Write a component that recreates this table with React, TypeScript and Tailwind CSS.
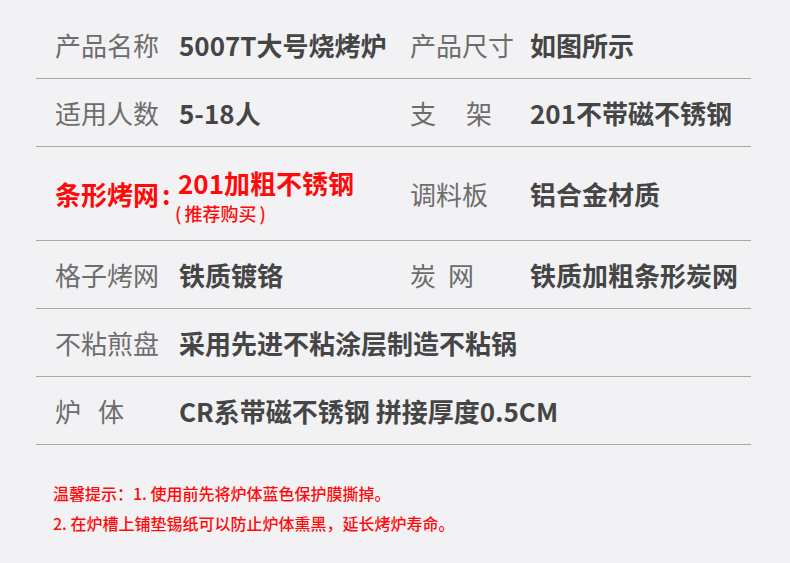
import React from "react";

const font = { fontFamily: '"Noto Sans CJK SC", "Noto Sans", sans-serif' };

const Label = ({ children }: { children: React.ReactNode }) => (
  <div className="w-[124px] shrink-0 text-[26px] leading-none text-[#6d6d6d]">{children}</div>
);

const Value = ({ children }: { children: React.ReactNode }) => (
  <div className="text-[26px] font-bold leading-none text-[#454545]">{children}</div>
);

const Spaced = ({ a, b, w }: { a: string; b: string; w: string }) => (
  <div className={`flex justify-between ${w}`}>
    <span>{a}</span>
    <span>{b}</span>
  </div>
);

const Row = ({ left, right, h = "h-[68px]" }: { left: React.ReactNode; right?: React.ReactNode; h?: string }) => (
  <div className={`flex items-center border-b border-[#a8a8a8] ${h}`}>
    <div className="flex w-[374px] shrink-0 items-center pl-[19px]">{left}</div>
    {right && <div className="flex items-center">{right}</div>}
  </div>
);

export default function App() {
  return (
    <div className="h-[563px] w-[790px] bg-[#f2f2f4]" style={font}>
      <div className="ml-[36px] w-[715px] pt-[11px]">
        <Row
          left={
            <>
              <Label>产品名称</Label>
              <Value>5007T大号烧烤炉</Value>
            </>
          }
          right={
            <>
              <div className="w-[120px] text-[26px] leading-none text-[#6d6d6d]">产品尺寸</div>
              <Value>如图所示</Value>
            </>
          }
        />
        <Row
          left={
            <>
              <Label>适用人数</Label>
              <Value>5-18人</Value>
            </>
          }
          right={
            <>
              <div className="w-[120px] text-[26px] leading-none text-[#6d6d6d]">
                <Spaced a="支" b="架" w="w-[82px]" />
              </div>
              <Value>201不带磁不锈钢</Value>
            </>
          }
        />
        <Row
          h="h-[94px]"
          left={
            <>
              <div className="w-[123px] shrink-0 whitespace-nowrap text-[26px] font-bold leading-none text-[#ff0a0a]">
                条形烤网<span className="ml-[3px]">:</span>
              </div>
              <div className="flex flex-col items-start pt-[5px] text-[#ff0a0a]">
                <div className="whitespace-nowrap text-[26px] font-bold leading-[30px]">201加粗不锈钢</div>
                <div className="mt-[3px] -ml-[3px] flex whitespace-nowrap text-[18px] font-medium leading-[24px]">
                  <span>(</span>
                  <span className="ml-[3px]">推荐购买</span>
                  <span className="ml-[3px]">)</span>
                </div>
              </div>
            </>
          }
          right={
            <>
              <div className="w-[120px] text-[26px] leading-none text-[#6d6d6d]">调料板</div>
              <Value>铝合金材质</Value>
            </>
          }
        />
        <Row
          left={
            <>
              <Label>格子烤网</Label>
              <Value>铁质镀铬</Value>
            </>
          }
          right={
            <>
              <div className="w-[120px] text-[26px] leading-none text-[#6d6d6d]">
                <Spaced a="炭" b="网" w="w-[64px]" />
              </div>
              <Value>铁质加粗条形炭网</Value>
            </>
          }
        />
        <Row
          left={
            <>
              <Label>不粘煎盘</Label>
              <div className="whitespace-nowrap">
                <Value>采用先进不粘涂层制造不粘锅</Value>
              </div>
            </>
          }
        />
        <Row
          left={
            <>
              <Label>
                <Spaced a="炉" b="体" w="w-[69px]" />
              </Label>
              <div className="whitespace-nowrap">
                <Value>CR系带磁不锈钢 拼接厚度0.5CM</Value>
              </div>
            </>
          }
        />
      </div>
      <div className="pl-[53px] pt-[33px] text-[16px] font-medium leading-[30px] text-[#ff0a0a]">
        <p>温馨提示：1. 使用前先将炉体蓝色保护膜撕掉。</p>
        <p>2. 在炉槽上铺垫锡纸可以防止炉体熏黑，延长烤炉寿命。</p>
      </div>
    </div>
  );
}
